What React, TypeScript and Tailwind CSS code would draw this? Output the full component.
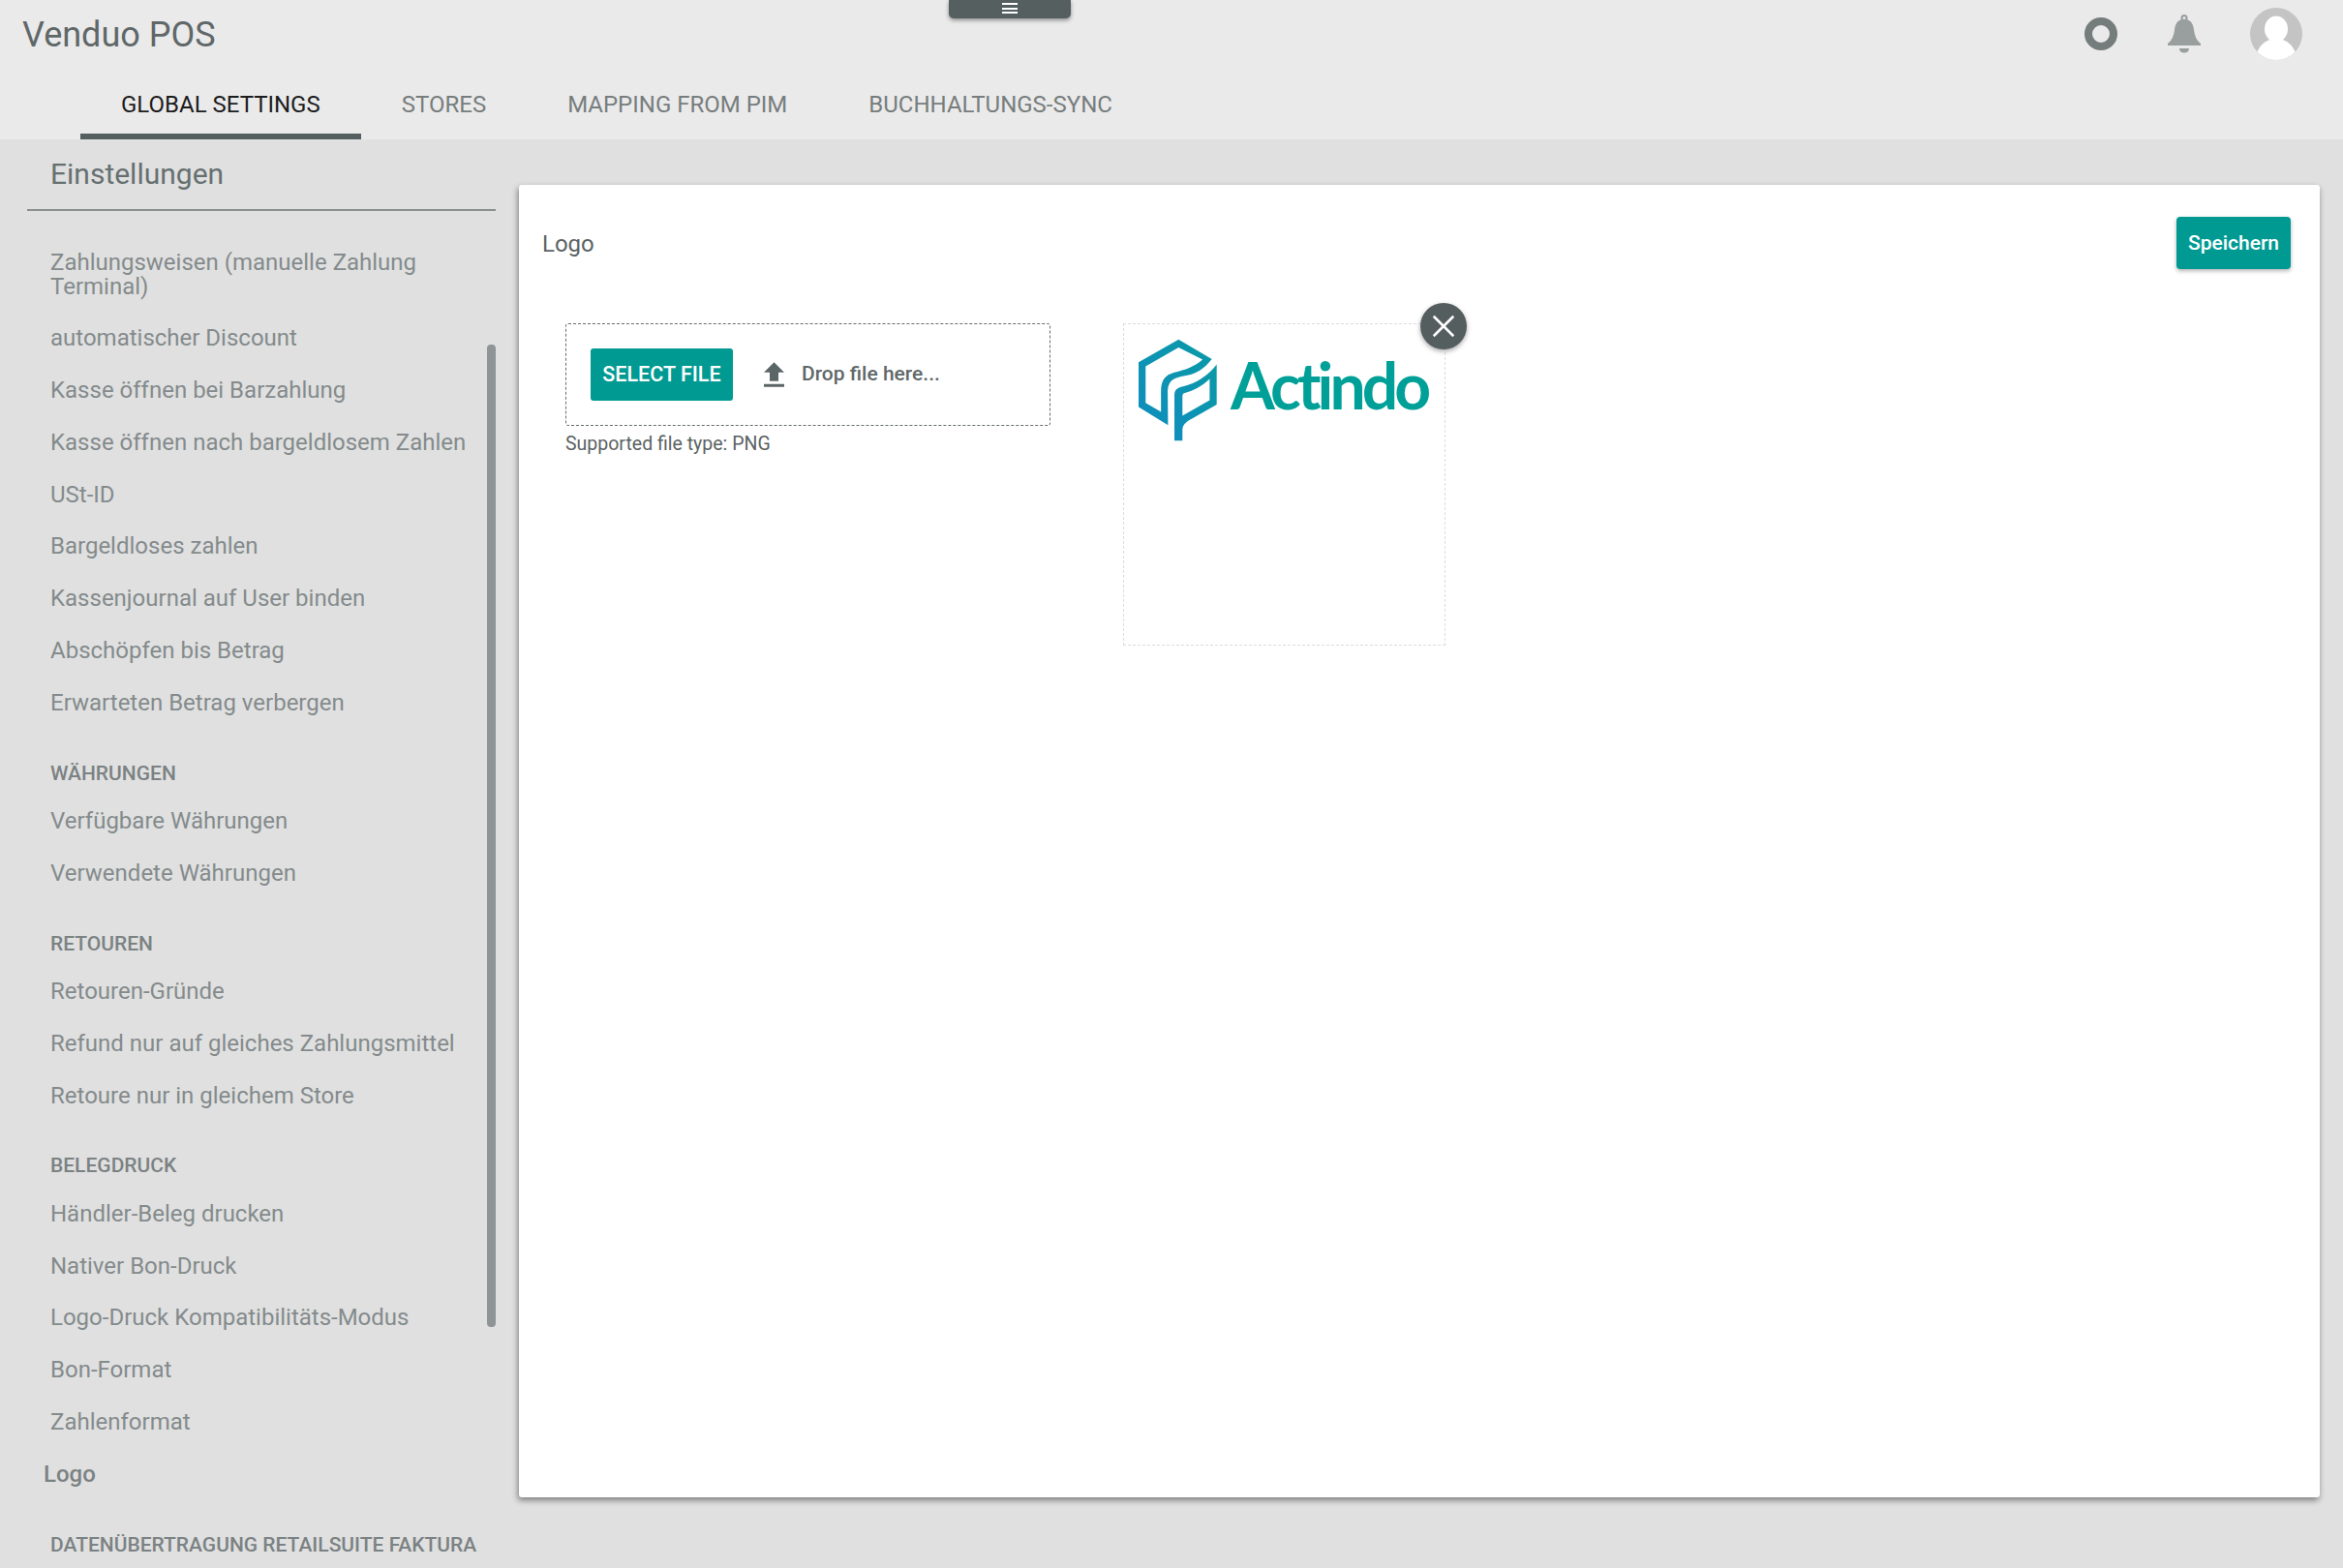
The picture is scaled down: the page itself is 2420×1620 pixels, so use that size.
import React from 'react';

type NavEntry = { label: string; kind?: 'header' | 'active' };

const navEntries: NavEntry[] = [
  { label: 'Zahlungsweisen (manuelle Zahlung Terminal)' },
  { label: 'automatischer Discount' },
  { label: 'Kasse öffnen bei Barzahlung' },
  { label: 'Kasse öffnen nach bargeldlosem Zahlen' },
  { label: 'USt-ID' },
  { label: 'Bargeldloses zahlen' },
  { label: 'Kassenjournal auf User binden' },
  { label: 'Abschöpfen bis Betrag' },
  { label: 'Erwarteten Betrag verbergen' },
  { label: 'WÄHRUNGEN', kind: 'header' },
  { label: 'Verfügbare Währungen' },
  { label: 'Verwendete Währungen' },
  { label: 'RETOUREN', kind: 'header' },
  { label: 'Retouren-Gründe' },
  { label: 'Refund nur auf gleiches Zahlungsmittel' },
  { label: 'Retoure nur in gleichem Store' },
  { label: 'BELEGDRUCK', kind: 'header' },
  { label: 'Händler-Beleg drucken' },
  { label: 'Nativer Bon-Druck' },
  { label: 'Logo-Druck Kompatibilitäts-Modus' },
  { label: 'Bon-Format' },
  { label: 'Zahlenformat' },
  { label: 'Logo', kind: 'active' },
  { label: 'DATENÜBERTRAGUNG RETAILSUITE FAKTURA', kind: 'header' },
];

const tabs = ['GLOBAL SETTINGS', 'STORES', 'MAPPING FROM PIM', 'BUCHHALTUNGS-SYNC'];

const BellIcon = () => (
  <svg width="34" height="40" viewBox="0 0 34 40" fill="#999f9e">
    <path
      fillRule="evenodd"
      d="M17 0a3.5 3.5 0 0 1 3.5 3.5v2C25 7 26.5 11 27 16c.7 6 3 11 7 14v2H0v-2c4-3 6.300-8 7-14 .5-5 2-9 6.500-10.500v-2A3.500 3.500 0 0 1 17 0zm0 2a1.500 1.500 0 1 0 0 3 1.500 1.500 0 0 0 0-3z"
    />
    <path d="M12 35h10c0 3-2 4.500-5 4.500S12 38 12 35z" />
  </svg>
);

const Avatar = () => (
  <svg width="54" height="54" viewBox="0 0 54 54">
    <clipPath id="avatar-clip">
      <circle cx="27" cy="27" r="27" />
    </clipPath>
    <g clipPath="url(#avatar-clip)">
      <rect width="54" height="54" fill="#c4c4c4" />
      <ellipse cx="27" cy="22" rx="12" ry="13.500" fill="#fff" />
      <ellipse cx="27" cy="53" rx="21" ry="21" fill="#fff" />
    </g>
  </svg>
);

const ActindoMark = () => (
  <svg width="81" height="106" viewBox="18 32 245 316" className="shrink-0">
    <defs>
      <linearGradient id="actindo-grad" x1="0" y1="1" x2="1" y2="0">
        <stop offset="0" stopColor="#0f8ebd" />
        <stop offset="1" stopColor="#0a9aa6" />
      </linearGradient>
    </defs>
    <path
      fill="url(#actindo-grad)"
      fillRule="evenodd"
      d="M143 32 247 93C222 124 200 138 170 144 125 152 109 160 109 200L110 300 18 243V103zM143 57 40 116V230L88 258V195C88 160 100 143 130 135 165 127 190 118 218 95z"
    />
    <path
      fill="url(#actindo-grad)"
      fillRule="evenodd"
      d="M262 110V235L185 279C165 290 155 298 155 316V348H130V206C130 188 140 182 160 178 200 168 235 145 262 110zM240 155C215 178 190 192 165 198 157 200 155 203 155 210V270L240 222z"
    />
  </svg>
);

export default function App() {
  return (
    <div className="relative flex h-[1620px] w-[2420px] flex-col overflow-hidden bg-[#e0e0e0] font-[Roboto,sans-serif]">
      {/* toolbar toggle hanging from the top edge */}
      <div className="absolute left-[980px] top-0 z-10 flex h-[19px] w-[126px] flex-col items-center gap-[2.500px] rounded-b-[5px] bg-[#555f60] pt-[3px] shadow-[0_2px_4px_rgba(0,0,0,0.4)]">
        <span className="h-[2px] w-[16px] bg-white" />
        <span className="h-[2px] w-[16px] bg-white" />
        <span className="h-[2px] w-[16px] bg-white" />
      </div>

      <header className="flex h-[144px] shrink-0 flex-col bg-[#eaeaea]">
        <div className="flex h-[72px] items-start justify-between">
          <h1 className="pl-[23px] pt-[15px] text-[36px] leading-[42px] text-[#5f6768]">Venduo POS</h1>
          <div className="flex items-center pr-[42px] pt-[8px]">
            <div className="h-[34px] w-[34px] rounded-full border-[8px] border-[#757c7c]" />
            <div className="ml-[52px]">
              <BellIcon />
            </div>
            <div className="ml-[51px]">
              <Avatar />
            </div>
          </div>
        </div>
        <nav className="flex h-[72px] pl-[83px]">
          {tabs.map((tab, i) => (
            <div
              key={tab}
              className={
                i === 0
                  ? 'flex items-center border-b-[6px] border-[#555f60] px-[42px] pt-[6px] text-[24px] text-[#1c1c1c]'
                  : 'flex items-center border-b-[6px] border-transparent px-[42px] pt-[6px] text-[24px] text-[#777d7d]'
              }
            >
              {tab}
            </div>
          ))}
        </nav>
      </header>

      <main className="flex min-h-0 flex-1">
        <aside className="relative w-[536px] shrink-0 overflow-hidden">
          <div className="ml-[28px] w-[484px] border-b-2 border-[#8a8f8f] pb-[18px] pl-[24px] pt-[18px]">
            <h2 className="text-[30px] leading-[36px] text-[#667071]">Einstellungen</h2>
          </div>
          <ul className="mt-[27px] w-[490px] pl-[52px]">
            {navEntries.map((entry) =>
              entry.kind === 'header' ? (
                <li
                  key={entry.label}
                  className="mb-[10px] mt-[32.500px] h-[26px] whitespace-nowrap text-[21px] leading-[26px] font-medium text-[#7b8283]"
                >
                  {entry.label}
                </li>
              ) : entry.kind === 'active' ? (
                <li key={entry.label} className="-ml-[7px] py-[14.400px] text-[24px] leading-[25px] font-medium text-[#7b8283]">
                  {entry.label}
                </li>
              ) : (
                <li key={entry.label} className="py-[14.400px] text-[24px] leading-[25px] text-[#848b8c] first:pb-[13.400px]">
                  {entry.label}
                </li>
              ),
            )}
          </ul>
          {/* overlay scrollbar */}
          <div className="absolute left-[503px] top-[212px] h-[1015px] w-[9px] rounded-[4px] bg-[#8f9496]" />
        </aside>

        <section className="mt-[47px] h-[1356px] w-[1860px] rounded-[3px] bg-white shadow-[-1px_3px_6px_rgba(0,0,0,0.45)]">
          <div className="flex items-center justify-between pl-[24px] pr-[30px] pt-[33px]">
            <h3 className="pt-[2px] text-[24px] text-[#5b6364]">Logo</h3>
            <button className="h-[54px] w-[118px] rounded-[4px] bg-[#009a93] pt-[2px] text-[21px] font-medium text-white shadow-[0_2px_4px_rgba(0,0,0,0.3)]">
              Speichern
            </button>
          </div>

          <div className="mt-[56px] flex items-start pl-[48px]">
            <div className="w-[501px]">
              <div className="flex h-[106px] items-center rounded-[3px] border border-dashed border-[#666d6e] pl-[25px]">
                <button className="h-[54px] w-[147px] rounded-[3px] bg-[#009a93] text-[21.500px] font-medium text-white">
                  SELECT FILE
                </button>
                <svg width="21" height="26" viewBox="5 3 14 17" fill="#5b6566" className="ml-[32px]">
                  <path d="M9 16h6v-6h4l-7-7-7 7h4zm-4 2h14v2H5z" />
                </svg>
                <span className="ml-[18px] text-[21px] font-medium text-[#5f6869]">Drop file here...</span>
              </div>
              <p className="mt-[7px] text-[19.500px] leading-[24px] text-[#5b6364]">Supported file type: PNG</p>
            </div>

            <div className="relative ml-[75px] h-[333px] w-[333px] border border-dashed border-[#dcdcdc] pl-[15px] pt-[15px]">
              <div className="flex items-start">
                <ActindoMark />
                <span className="ml-[14px] mt-[8px] font-[Lato,sans-serif] text-[66px] leading-[80px] font-bold tracking-[-3.900px] text-[#00a098]">
                  Actindo
                </span>
              </div>
              <button className="absolute -right-[23px] -top-[22px] flex h-[48px] w-[48px] items-center justify-center rounded-full bg-[#555e5f] shadow-[0_2px_5px_rgba(0,0,0,0.35)]">
                <svg width="26" height="26" viewBox="0 0 24 24" stroke="#fff" strokeWidth="2.400" fill="none">
                  <path d="M2.500 2.500l19 19M21.500 2.500l-19 19" />
                </svg>
              </button>
            </div>
          </div>
        </section>
      </main>
    </div>
  );
}
